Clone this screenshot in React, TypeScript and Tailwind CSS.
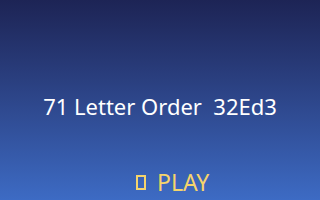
import React from "react";

export default function App() {
  return (
    <div
      className="w-[320px] h-[200px] bg-gradient-to-b from-[#1d2455] to-[#3d6bc4] flex flex-col items-center text-white overflow-hidden"
      style={{ fontFamily: '"Noto Sans", sans-serif' }}
    >
      <div className="mt-[92px] text-[22px] leading-[28px] whitespace-pre">71 Letter Order  32Ed3</div>
      <div className="mt-[48px] w-full pl-[136px] flex items-center text-[23px] leading-[28px] text-[#f5d46c]">
        <span className="inline-block w-[10px] h-[15px] border-2 border-[#f5d46c] mr-[11px]"></span>
        <span>PLAY</span>
      </div>
    </div>
  );
}
